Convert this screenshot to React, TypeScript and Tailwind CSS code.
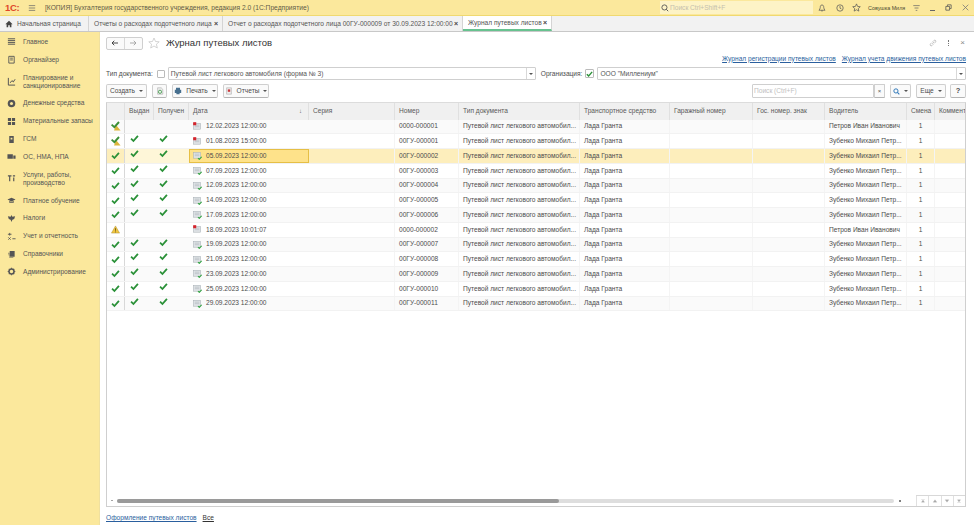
import React from "react";

const cols = "grid grid-cols-[18px_29px_35px_120px_86px_64px_121px_90px_83px_72px_82px_28px_31px]";

function Check({ className = "" }: { className?: string }) {
  return (
    <svg viewBox="0 0 10 10" className={"w-[9px] h-[9px] " + className}>
      <path d="M1.2 5.2 L3.8 7.8 L8.8 2" fill="none" stroke="#2a9138" strokeWidth="2" />
    </svg>
  );
}

function DocIcon({ kind }: { kind: "ok" | "red" }) {
  return (
    <svg viewBox="0 0 10 10" className="w-[9px] h-[9px] shrink-0">
      <rect x="0.5" y="1.5" width="8" height="6.5" fill="#dfe3e6" stroke="#a9b0b5" strokeWidth="0.6" />
      <path d="M2 3.5H7M2 5.2H7" stroke="#aab1b6" strokeWidth="0.6" />
      {kind === "ok" ? (
        <path d="M5.5 8 L7 9.3 L9.6 6.4" fill="none" stroke="#35a544" strokeWidth="1.2" />
      ) : (
        <rect x="0.2" y="0.2" width="3.4" height="3.4" fill="#d5242c" />
      )}
    </svg>
  );
}

function RowMark({ kind }: { kind: "post" | "ok" | "warn" }) {
  if (kind === "ok") return <Check />;
  if (kind === "warn")
    return (
      <svg viewBox="0 0 10 10" className="w-[9px] h-[9px]">
        <path d="M5 1 L9.5 9 H0.5 Z" fill="#f0c540" stroke="#a98a2a" strokeWidth="0.5" />
        <path d="M5 3.6V6.4M5 7.2V8.2" stroke="#5b4a15" strokeWidth="0.9" />
      </svg>
    );
  return (
    <svg viewBox="0 0 10 10" className="w-[10px] h-[10px]">
      <path d="M5 4 L9.6 9.6 H3 Z" fill="#dcb63a" />
      <path d="M0.6 3.6 L3.4 6.2 L8 1" fill="none" stroke="#3c8f37" strokeWidth="1.9" />
    </svg>
  );
}

const menu: [string, React.ReactNode][] = [
  ["Главное", <path key="a" d="M1 2H9M1 4H9M1 6H9M1 8H9" stroke="#555" strokeWidth="1.1" fill="none" />],
  ["Органайзер", <path key="a" d="M2 1.5H8V9H2ZM3.5 3.5H6.5M3.5 5.5H6.5" stroke="#555" strokeWidth="1" fill="none" />],
  ["Планирование и\nсанкционирование", <path key="a" d="M1.5 1V9H9M3.5 6.5L5.5 4L7 5.5L9 2.5" stroke="#555" strokeWidth="1.1" fill="none" />],
  ["Денежные средства", <g key="a"><circle cx="5" cy="5" r="4.2" fill="#555" /><circle cx="5" cy="5" r="1.7" fill="#fbe89c" /></g>],
  ["Материальные запасы", <path key="a" d="M1 1H4.5V4.5H1ZM5.5 1H9V4.5H5.5ZM1 5.5H4.5V9H1ZM5.5 5.5H9V9H5.5Z" fill="#555" />],
  ["ГСМ", <path key="a" d="M2.5 1H7.5V9H2.5ZM4 3V5H6V3Z" fill="#555" fillRule="evenodd" />],
  ["ОС, НМА, НПА", <path key="a" d="M0.5 2.5H6.5V7.5H0.5ZM7 4H9.5V7.5H7Z" fill="#555" />],
  ["Услуги, работы,\nпроизводство", <path key="a" d="M1 2H5M3 2V8M6.5 2H9M7.5 4V8" stroke="#555" strokeWidth="1.3" fill="none" />],
  ["Платное обучение", <path key="a" d="M0.5 4L5 2L9.5 4L5 6ZM2.5 5.5V7.5H7.5V5.5L5 6.8Z" fill="#555" />],
  ["Налоги", <path key="a" d="M5 1L6 3L9 2.5L8 5.5L6 6.5L5 9L4 6.5L2 5.5L1 2.5L4 3Z" fill="#555" />],
  ["Учет и отчетность", <path key="a" d="M1 2.5H5M3 1V4M6 7.5H9.5M1.5 6L4 8.5M4 6L1.5 8.5" stroke="#555" strokeWidth="1" fill="none" />],
  ["Справочники", <path key="a" d="M3 1H8.5V7.5H3ZM1.5 3H2.5V9H7V8.2H2.5" fill="#555" />],
  ["Администрирование", <g key="a"><circle cx="5" cy="5" r="2.8" fill="none" stroke="#555" strokeWidth="1.7" /><path d="M5 0.8V2M5 8V9.2M0.8 5H2M8 5H9.2M2 2L2.9 2.9M7.1 7.1L8 8M8 2L7.1 2.9M2.9 7.1L2 8" stroke="#555" strokeWidth="1.2" /></g>],
];

type Row = { mark: "post" | "ok" | "warn"; g: boolean; d: string; red?: boolean; n: string; driver: string };
const rows: Row[] = [
  { mark: "post", g: false, d: "12.02.2023 12:00:00", red: true, n: "0000-000001", driver: "Петров Иван Иванович" },
  { mark: "post", g: true, d: "01.08.2023 15:00:00", red: true, n: "00ГУ-000001", driver: "Зубенко Михаил Петр..." },
  { mark: "ok", g: true, d: "05.09.2023 12:00:00", n: "00ГУ-000002", driver: "Зубенко Михаил Петр..." },
  { mark: "ok", g: true, d: "07.09.2023 12:00:00", n: "00ГУ-000003", driver: "Зубенко Михаил Петр..." },
  { mark: "ok", g: true, d: "12.09.2023 12:00:00", n: "00ГУ-000004", driver: "Зубенко Михаил Петр..." },
  { mark: "ok", g: true, d: "14.09.2023 12:00:00", n: "00ГУ-000005", driver: "Зубенко Михаил Петр..." },
  { mark: "ok", g: true, d: "17.09.2023 12:00:00", n: "00ГУ-000006", driver: "Зубенко Михаил Петр..." },
  { mark: "warn", g: false, d: "18.09.2023 10:01:07", red: true, n: "0000-000002", driver: "Петров Иван Иванович" },
  { mark: "ok", g: true, d: "19.09.2023 12:00:00", n: "00ГУ-000007", driver: "Зубенко Михаил Петр..." },
  { mark: "ok", g: true, d: "21.09.2023 12:00:00", n: "00ГУ-000008", driver: "Зубенко Михаил Петр..." },
  { mark: "ok", g: true, d: "23.09.2023 12:00:00", n: "00ГУ-000009", driver: "Зубенко Михаил Петр..." },
  { mark: "ok", g: true, d: "25.09.2023 12:00:00", n: "00ГУ-000010", driver: "Зубенко Михаил Петр..." },
  { mark: "ok", g: true, d: "29.09.2023 12:00:00", n: "00ГУ-000011", driver: "Зубенко Михаил Петр..." },
];

const heads = ["", "Выдан", "Получен", "Дата", "Серия", "Номер", "Тип документа", "Транспортное средство", "Гаражный номер", "Гос. номер. знак", "Водитель", "Смена", "Коммент"];

function Btn({ children, className = "" }: { children: React.ReactNode; className?: string }) {
  return (
    <div className={"h-[14px] flex items-center justify-center gap-[4px] rounded-[2px] border border-[#cfcfcf] border-b-[#b5b5b5] bg-[#fafafa] text-[#4a4a4a] " + className}>
      {children}
    </div>
  );
}

const Caret = () => <span className="w-0 h-0 border-x-[2px] border-x-transparent border-t-[2px] border-t-[#555]" />;

export default function App() {
  return (
    <div className="w-[974px] h-[525px] overflow-hidden bg-white flex flex-col text-[6.6px] leading-[8px] text-[#4c4c4c] font-['Liberation_Sans',Arial,sans-serif]">
      {/* title bar */}
      <div className="h-[16px] shrink-0 bg-[#fbe89c] border-b border-[#f0d970] flex items-center">
        <span className="ml-[5px] w-[18px] shrink-0 text-[#e0492a] font-bold text-[9.5px] leading-[10px] tracking-[-0.3px]">1С:</span>
        <svg viewBox="0 0 10 10" className="ml-[5px] w-[8px] h-[8px] shrink-0"><path d="M1 2H9M1 5H9M1 8H9" stroke="#666" strokeWidth="0.9" /></svg>
        <span className="ml-[9px] w-[265px] shrink-0 text-[#5f5b47] text-[6.67px] whitespace-nowrap">[КОПИЯ] Бухгалтерия государственного учреждения, редакция 2.0 (1С:Предприятие)</span>
        <div className="ml-[350px] w-[153px] h-[13px] bg-[#fdf3c6] flex items-center pl-[1px] shrink-0">
          <svg viewBox="0 0 10 10" className="w-[8px] h-[8px]"><circle cx="4.3" cy="4.3" r="3.2" fill="none" stroke="#555" strokeWidth="1.1" /><path d="M6.6 6.6L9 9" stroke="#555" strokeWidth="1.2" /></svg>
          <span className="ml-[1px] text-[#c4c0ad]">Поиск Ctrl+Shift+F</span>
        </div>
        <svg viewBox="0 0 10 10" className="ml-[5px] w-[8px] h-[8px] shrink-0"><path d="M5 1.2C3 1.2 2.8 3 2.8 4.5C2.8 6 2 6.8 1.2 7.8H8.8C8 6.8 7.2 6 7.2 4.5C7.2 3 7 1.2 5 1.2ZM4 8.6H6" fill="none" stroke="#555" strokeWidth="0.9" /></svg>
        <svg viewBox="0 0 10 10" className="ml-[10px] w-[8px] h-[8px] shrink-0"><circle cx="5" cy="5" r="4" fill="none" stroke="#555" strokeWidth="0.9" /><path d="M5 2.5V5.2L6.8 6.2" fill="none" stroke="#555" strokeWidth="0.9" /></svg>
        <svg viewBox="0 0 10 10" className="ml-[8px] w-[9px] h-[9px] shrink-0"><path d="M5 1L6.2 3.8L9.2 4.1L7 6.1L7.6 9L5 7.5L2.4 9L3 6.1L0.8 4.1L3.8 3.8Z" fill="none" stroke="#555" strokeWidth="0.8" /></svg>
        <span className="ml-[7px] w-[37px] shrink-0 text-[5.4px] text-[#4c4c30] whitespace-nowrap">Совушка Миля</span>
        <svg viewBox="0 0 10 10" className="ml-[7px] w-[9px] h-[8px] shrink-0"><path d="M1 2H9M2.5 5H7.5M4 8H6" stroke="#666" strokeWidth="0.9" /></svg>
        <span className="ml-[9px] w-[5px] h-[1px] bg-[#666] mt-[6px] shrink-0" />
        <svg viewBox="0 0 10 10" className="ml-[10px] w-[7px] h-[7px] shrink-0"><path d="M3.5 3V1.2H8.8V6.5H7M1.2 3.5H6.5V8.8H1.2Z" fill="none" stroke="#555" strokeWidth="1.1" /></svg>
        <svg viewBox="0 0 10 10" className="ml-[10px] w-[7px] h-[7px] shrink-0"><path d="M1 1L9 9M9 1L1 9" stroke="#777" strokeWidth="1.1" /></svg>
      </div>

      {/* tab bar */}
      <div className="h-[16px] shrink-0 bg-[#f2f2f2] border-b border-[#c8c8c8] flex items-stretch text-[#555]">
        <div className="w-[89px] flex items-center border-r border-[#d4d4d4] pl-[5px] gap-[4px] shrink-0">
          <svg viewBox="0 0 10 10" className="w-[8px] h-[8px]"><path d="M5 1L9.5 5.2H8V9H6V6.5H4V9H2V5.2H0.5Z" fill="#444" /></svg>
          <span className="whitespace-nowrap">Начальная страница</span>
        </div>
        <div className="w-[134px] flex items-center justify-between border-r border-[#d4d4d4] pl-[5px] pr-[4px] shrink-0">
          <span className="whitespace-nowrap">Отчеты о расходах подотчетного лица</span><span className="text-[#444] text-[7px] font-bold">×</span>
        </div>
        <div className="w-[240px] flex items-center justify-between border-r border-[#d4d4d4] pl-[5px] pr-[4px] shrink-0">
          <span className="whitespace-nowrap">Отчет о расходах подотчетного лица 00ГУ-000009 от 30.09.2023 12:00:00</span><span className="text-[#444] text-[7px] font-bold">×</span>
        </div>
        <div className="w-[89px] flex items-center justify-between bg-white border-r border-[#d4d4d4] border-b-2 border-b-[#67c28f] pl-[5px] pr-[4px] shrink-0">
          <span className="whitespace-nowrap">Журнал путевых листов</span><span className="text-[#444] text-[7px] font-bold">×</span>
        </div>
      </div>

      <div className="flex-1 flex min-h-0">
        {/* sidebar */}
        <div className="w-[100px] shrink-0 bg-[#fbe89c] border-r border-[#efe0a0] pt-[1px]">
          {menu.map(([label, icon]) => {
            const two = label.includes("\n");
            return (
              <div key={label} className={"flex items-center pl-[7px] " + (two ? "h-[26px]" : "h-[17.8px]")}>
                <svg viewBox="0 0 10 10" className="w-[9px] h-[9px] shrink-0">{icon}</svg>
                <span className="ml-[7px] whitespace-pre-line text-[#555]">{label}</span>
              </div>
            );
          })}
        </div>

        {/* content */}
        <div className="flex-1 min-w-0 flex flex-col pl-[6px] pr-[8px]">
          {/* heading */}
          <div className="h-[21px] shrink-0 flex items-center pt-[1px]">
            <div className="w-[37px] h-[13px] flex rounded-[2px] border border-[#cfcfcf] bg-[#fafafa] shrink-0">
              <div className="w-1/2 flex items-center justify-center border-r border-[#d8d8d8]">
                <svg viewBox="0 0 10 8" className="w-[8px] h-[6px]"><path d="M9 4H1.5M4 1L1 4L4 7" fill="none" stroke="#333" strokeWidth="1.2" /></svg>
              </div>
              <div className="w-1/2 flex items-center justify-center">
                <svg viewBox="0 0 10 8" className="w-[8px] h-[6px]"><path d="M1 4H8.5M6 1L9 4L6 7" fill="none" stroke="#999" strokeWidth="1.1" /></svg>
              </div>
            </div>
            <svg viewBox="0 0 12 12" className="ml-[5px] w-[12px] h-[12px] shrink-0"><path d="M6 1L7.5 4.5L11.2 4.8L8.4 7.2L9.3 11L6 9L2.7 11L3.6 7.2L0.8 4.8L4.5 4.5Z" fill="none" stroke="#c9c9c9" strokeWidth="0.8" /></svg>
            <span className="ml-[6px] text-[9.5px] leading-[12px] text-[#333] whitespace-nowrap">Журнал путевых листов</span>
            <div className="ml-auto flex items-center gap-[11px] pr-[1px]">
              <svg viewBox="0 0 10 10" className="w-[8px] h-[8px]"><path d="M4 6L6.5 3.5M3.5 4.5L1.8 6.2C0.6 7.6 2.4 9.4 3.8 8.2L5.5 6.5M4.5 3.5L6.2 1.8C7.6 0.6 9.4 2.4 8.2 3.8L6.5 5.5" fill="none" stroke="#999" strokeWidth="0.7" /></svg>
              <span className="w-[1px] h-[6px] border-l border-dotted border-[#777]" />
              <span className="text-[#888] text-[8px] leading-[8px]">×</span>
            </div>
          </div>
          {/* links */}
          <div className="h-[11px] shrink-0 flex justify-end gap-[6px] items-center text-[#2a5f9e] underline">
            <span>Журнал регистрации путевых листов</span>
            <span>Журнал учета движения путевых листов</span>
          </div>
          {/* filter */}
          <div className="h-[13px] mt-[3px] shrink-0 flex items-center">
            <span className="whitespace-nowrap">Тип документа:</span>
            <span className="ml-[4px] w-[8px] h-[8px] border border-[#bbb] rounded-[1px] bg-white shrink-0" />
            <div className="ml-[3px] w-[368px] h-[13px] border border-[#cfcfcf] rounded-[1px] flex items-center justify-between pl-[2px] shrink-0">
              <span className="text-[#555]">Путевой лист легкового автомобиля (форма № 3)</span>
              <span className="w-[9px] h-full border-l border-[#d8d8d8] flex items-center justify-center"><Caret /></span>
            </div>
            <span className="ml-[5px] whitespace-nowrap">Организация:</span>
            <span className="ml-[3px] w-[9px] h-[9px] border border-[#bbb] rounded-[1px] flex items-center justify-center shrink-0"><Check className="!w-[8px] !h-[8px]" /></span>
            <div className="ml-[3px] flex-1 h-[13px] border border-[#cfcfcf] rounded-[1px] flex items-center justify-between pl-[2px]">
              <span className="text-[#555]">ООО "Миллениум"</span>
              <span className="w-[9px] h-full border-l border-[#d8d8d8] flex items-center justify-center"><Caret /></span>
            </div>
          </div>
          {/* toolbar */}
          <div className="h-[14px] mt-[4px] shrink-0 flex items-center">
            <Btn className="w-[41px]">Создать <Caret /></Btn>
            <Btn className="ml-[5px] w-[15px]">
              <svg viewBox="0 0 10 10" className="w-[8px] h-[8px]"><path d="M2 1H6.5L8.5 3V9H2Z" fill="#eee" stroke="#999" strokeWidth="0.6" /><circle cx="5" cy="6" r="2" fill="none" stroke="#3a9b44" strokeWidth="1" /></svg>
            </Btn>
            <Btn className="ml-[5px] w-[46px]">
              <svg viewBox="0 0 10 10" className="w-[8px] h-[8px]"><path d="M2.5 1H7.5V3.5H2.5ZM1 3.5H9V7.5H1ZM3 6.5H7V9H3Z" fill="#47708f" /></svg>
              Печать <Caret />
            </Btn>
            <Btn className="ml-[5px] w-[46px]">
              <svg viewBox="0 0 10 10" className="w-[8px] h-[8px]"><path d="M2 1H8V9H2Z" fill="#eee" stroke="#999" strokeWidth="0.6" /><rect x="3.5" y="3" width="3" height="3" fill="#c9393c" /></svg>
              Отчеты <Caret />
            </Btn>
            <div className="ml-auto w-[122px] h-[14px] border border-[#cfcfcf] rounded-[1px] flex items-center pl-[1px] text-[#c0c0c0]">Поиск (Ctrl+F)</div>
            <Btn className="ml-0 w-[11px] !rounded-[1px]"><span className="text-[#555] text-[6px]">×</span></Btn>
            <Btn className="ml-[5px] w-[21px]">
              <svg viewBox="0 0 10 10" className="w-[7px] h-[7px]"><circle cx="4.2" cy="4.2" r="3" fill="none" stroke="#2e77b8" strokeWidth="1.4" /><path d="M6.4 6.4L9 9" stroke="#2e77b8" strokeWidth="1.5" /></svg>
              <Caret />
            </Btn>
            <Btn className="ml-[5px] w-[30px]">Еще <Caret /></Btn>
            <Btn className="ml-[4px] w-[16px]"><span className="font-bold text-[7.5px]">?</span></Btn>
          </div>

          {/* table */}
          <div className="mt-[4px] flex-1 min-h-0 border border-[#cfcfcf] border-t-[#dcdcdc] relative overflow-hidden">
            <div className={cols + " h-[16.5px] bg-[#f0f0f0]"}>
              {heads.map((h, i) => (
                <div key={i} className={"flex items-center whitespace-nowrap overflow-hidden border-r border-[#e0e0e0] pl-[4px] text-[#5a5a5a] " + (i === 3 ? "justify-between pr-[6px]" : "") + (i === 12 ? " border-r-0" : "")}>
                  {h}
                  {i === 3 && <span className="text-[6px]">↓</span>}
                </div>
              ))}
            </div>
            {rows.map((r, i) => {
              const sel = i === 2;
              const zebra = i % 2 === 0 ? "bg-[#fafafa]" : "bg-white";
              return (
                <div key={r.d} className={cols + " h-[14.75px] border-b border-[#f2f2f2] " + (sel ? "bg-[#fdeebc]" : zebra)}>
                  <div className="flex items-center justify-center border-r border-[#d8d8d8]"><RowMark kind={r.mark} /></div>
                  <div className={"flex items-start pl-[5px] " + (sel ? "bg-[#fef6d8]" : "")}>{r.g && <Check />}</div>
                  <div className={"flex items-start pl-[5px] " + (sel ? "bg-[#fef6d8]" : "")}>{r.g && <Check />}</div>
                  <div className={"flex items-center gap-[4px] whitespace-nowrap " + (sel ? "bg-[#fee28a] border border-[#e6bf45] pl-[3px]" : "pl-[4px]")}>
                    <DocIcon kind={r.red ? "red" : "ok"} />
                    <span>{r.d}</span>
                  </div>
                  <div className="border-r border-[#f4f4f4]" />
                  <div className="flex items-center pl-[4px] whitespace-nowrap border-r border-[#f4f4f4]">{r.n}</div>
                  <div className="flex items-center pl-[4px] whitespace-nowrap overflow-hidden border-r border-[#f4f4f4]">Путевой лист легкового автомобил...</div>
                  <div className="flex items-center pl-[4px] whitespace-nowrap border-r border-[#f4f4f4]">Лада Гранта</div>
                  <div className="border-r border-[#f4f4f4]" />
                  <div className="border-r border-[#f4f4f4]" />
                  <div className="flex items-center pl-[4px] whitespace-nowrap overflow-hidden border-r border-[#f4f4f4]">{r.driver}</div>
                  <div className="flex items-center justify-center border-r border-[#f4f4f4]">1</div>
                  <div />
                </div>
              );
            })}
            {/* horizontal scrollbar */}
            <div className="absolute left-[4px] right-[64px] bottom-[3px] h-[5px] flex items-center">
              <span className="w-[1.5px] h-[1.5px] rounded-full bg-[#999] shrink-0" />
              <div className="ml-[4px] flex-1 h-[4px] rounded-full bg-[#dedede] relative">
                <div className="absolute left-0 top-0 bottom-0 w-[442px] rounded-full bg-[#9a9a9a]" />
              </div>
              <span className="ml-[5px] w-[2px] h-[2px] rounded-full bg-[#555] shrink-0" />
            </div>
            {/* page buttons */}
            <div className="absolute right-0 bottom-0 w-[49px] h-[11px] flex border-t border-[#d8d8d8]">
              {["M2 2.5H8M5 3.5L2.5 7H7.5Z", "M5 3L2 7H8Z", "M5 7L2 3H8Z", "M2 7.5H8M5 6.5L2.5 3H7.5Z"].map((d) => (
                <div key={d} className="flex-1 flex items-center justify-center border-l border-[#e0e0e0]">
                  <svg viewBox="0 0 10 10" className="w-[6px] h-[6px]"><path d={d} fill="#aaa" stroke="#aaa" strokeWidth="0.5" /></svg>
                </div>
              ))}
            </div>
          </div>

          {/* footer */}
          <div className="h-[18px] shrink-0 flex items-center gap-[6px] pt-[4px]">
            <span className="text-[#2a5f9e] underline">Оформление путевых листов</span>
            <span className="text-[#333] underline">Все</span>
          </div>
        </div>
      </div>
    </div>
  );
}
